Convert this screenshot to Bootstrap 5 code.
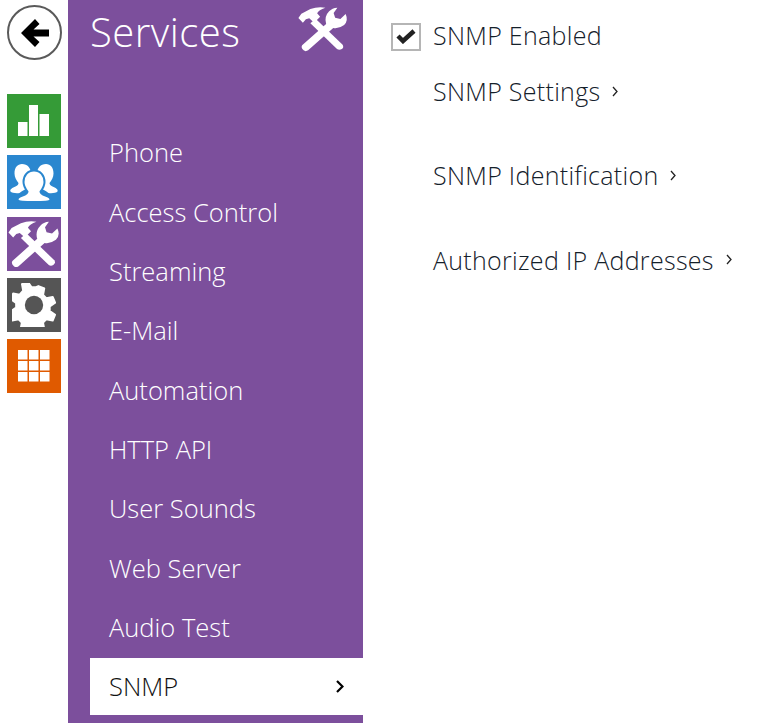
<!DOCTYPE html>
<html lang="en">
<head>
<meta charset="utf-8">
<title>SNMP</title>
<link rel="stylesheet" href="https://cdn.jsdelivr.net/npm/bootstrap@5.3.0/dist/css/bootstrap.min.css">
<style>
html,body{height:723px;overflow:hidden;background:#fff}
body{font-family:"Open Sans","Liberation Sans",sans-serif;font-weight:300;color:#111}
.rail{width:68px;padding:5px 0 0 7px}
.back{width:55px;height:55px;border:2px solid #5a5a5a;border-radius:50%;margin-bottom:34px}
.tile{width:54px;height:54px;margin-bottom:7.25px}
.tile svg{flex-shrink:0}
.t-green{background:#359b37}.t-blue{background:#2a87cf}.t-purple{background:#7c4f9c}.t-gray{background:#555}.t-orange{background:#e05a00}
.panel{width:295px;height:723px;background:#7c4f9c;color:#fff}
.head{height:124px;padding:4px 12px 0 22px}
.head h1{font-size:40px;font-weight:300;letter-spacing:.5px;margin:2px 0 0;line-height:52px}
.item{height:57px;margin:0 0 2.33px 22px;padding:0 19px 0 19px;font-size:25.5px;color:#fff}
.item.on{background:#fff;color:#111}
.main{padding:7px 0 0 28px}
.box{width:30px;height:28px;border:2px solid #b5b5b5;margin:3px 12px 0 0}
.line{font-size:25px;letter-spacing:.3px;line-height:56px;height:56px;color:#14202a}
.gap-line{margin:0 0 28.3px 42px}
.chev{margin-left:12px}
</style>
</head>
<body>
<svg width="0" height="0" class="position-absolute">
<symbol id="tools" viewBox="9 0 149.300 150" preserveAspectRatio="none">
<path fill="#fff" d="M18 42L26 29L50 15Q70 7 90 11Q72 18 68 28L76 38L60 56L47 43L38 46L30 56Z"/>
<path fill="#fff" d="M50 58L64 44L136 122Q140 130 134 135Q127 140 121 135Z"/>
<path fill="#fff" d="M28 124L92 60Q86 38 100 22Q108 12 122 11L112 27L116 41L130 45L144 30Q152 50 140 63Q126 75 111 72L44 139Q37 144 32 139Q24 132 28 124Z"/>
</symbol>
</svg>
<div class="d-flex">
<div class="rail flex-shrink-0">
<div class="back d-flex align-items-center justify-content-center">
<svg width="28" height="28" viewBox="0 0 28 28"><path d="M0 14L14 0L18.500 5L12.500 10.500H28V17.500H12.500L18.500 23L14 28Z" fill="#000"/></svg>
</div>
<div class="tile t-green d-flex align-items-center justify-content-center">
<svg width="32" height="32" viewBox="0 0 32 32"><path d="M0 17h9.500v14H0zM11 0h9v31h-9zM21.500 9H31v22h-9.500z" fill="#fff"/></svg>
</div>
<div class="tile t-blue d-flex align-items-center justify-content-center">
<svg width="54" height="54" viewBox="0 0 54 54"><g fill="#fff"><path d="M15 9c5.500 0 9 4 9 10 0 4-1.500 7-3.500 9.500 0 2 1 3 2 4-3 1-7 3-10 5.500-3 .5-8 0-9-1.500-1-2 2-4 5-5 2-1 3-2 3-3.500-2-2.500-4-5.500-4-9.500 0-6 3-9.500 7.500-9.500z"/><path d="M15 9c5.500 0 9 4 9 10 0 4-1.500 7-3.500 9.500 0 2 1 3 2 4-3 1-7 3-10 5.500-3 .5-8 0-9-1.500-1-2 2-4 5-5 2-1 3-2 3-3.500-2-2.500-4-5.500-4-9.500 0-6 3-9.500 7.500-9.500z" transform="matrix(-1 0 0 1 54 0)"/><path d="M27 15.500c6.500 0 10.500 5 10.500 11.500 0 4-2 7-4 9.500 0 2 2 3 5 4 3 1 5 2 5 4 0 2-8 2.500-16.500 2.500s-16.500-.5-16.500-2.500c0-2 2-3 5-4 3-1 5-2 5-4-2-2.500-4-5.500-4-9.500 0-6.500 4-11.500 10.500-11.500z" stroke="#2a87cf" stroke-width="2"/></g></svg>
</div>
<div class="tile t-purple d-flex align-items-center justify-content-center">
<svg width="58" height="52"><use href="#tools"/></svg>
</div>
<div class="tile t-gray d-flex align-items-center justify-content-center">
<svg width="44" height="44" viewBox="-2 -2 48 48"><path fill="#fff" stroke="#fff" stroke-width="2" stroke-linejoin="round" fill-rule="evenodd" transform="rotate(22.5 22 22)" d="M18.500 1h7l1.500 7 4.500 1.900 6-3.900 4.900 4.900-3.900 6 1.900 4.500 7 1.500v7l-7 1.500-1.900 4.500 3.900 6-4.900 4.900-6-3.900-4.500 1.900-1.500 7h-7l-1.500-7-4.500-1.900-6 3.900L1.100 38l3.900-6-1.900-4.500-7-1.500v-7l7-1.500L5 12 1.100 6 6 1.100l6 3.900 4.500-1.900z" transform-origin="0 0"/><circle cx="22" cy="22" r="10" fill="#555"/></svg>
</div>
<div class="tile t-orange d-flex align-items-center justify-content-center">
<svg width="32" height="32" viewBox="0 0 32 32"><path fill="#fff" d="M0 0h9.500v9.500H0zM11 0h9.500v9.500H11zM22 0h9.500v9.500H22zM0 11h9.500v9.500H0zM11 11h9.500v9.500H11zM22 11h9.500v9.500H22zM0 22h9.500v9.500H0zM11 22h9.500v9.500H11zM22 22h9.500v9.500H22z"/></svg>
</div>
</div>
<div class="panel flex-shrink-0">
<div class="head d-flex justify-content-between align-items-start">
<h1>Services</h1>
<svg width="56" height="50"><use href="#tools"/></svg>
</div>
<div class="item d-flex align-items-center">Phone</div>
<div class="item d-flex align-items-center">Access Control</div>
<div class="item d-flex align-items-center">Streaming</div>
<div class="item d-flex align-items-center">E-Mail</div>
<div class="item d-flex align-items-center">Automation</div>
<div class="item d-flex align-items-center">HTTP API</div>
<div class="item d-flex align-items-center">User Sounds</div>
<div class="item d-flex align-items-center">Web Server</div>
<div class="item d-flex align-items-center">Audio Test</div>
<div class="item on d-flex align-items-center justify-content-between">SNMP
<svg width="8" height="13" viewBox="0 0 8 13"><path d="M1 1l5.500 5.500L1 12" fill="none" stroke="#000" stroke-width="2.200"/></svg>
</div>
</div>
<div class="main flex-grow-1">
<div class="line d-flex align-items-center">
<span class="box d-flex align-items-center justify-content-center flex-shrink-0"><svg width="20" height="15" viewBox="0 0 20 15"><path d="M2 7l5 5L18 2" fill="none" stroke="#222" stroke-width="4.500"/></svg></span>
SNMP Enabled</div>
<div class="line gap-line d-flex align-items-center">SNMP Settings<svg class="chev" width="6" height="11" viewBox="0 0 6 11"><path d="M1 1l4 4.500L1 10" fill="none" stroke="#222" stroke-width="1.300"/></svg></div>
<div class="line gap-line d-flex align-items-center">SNMP Identification<svg class="chev" width="6" height="11" viewBox="0 0 6 11"><path d="M1 1l4 4.500L1 10" fill="none" stroke="#222" stroke-width="1.300"/></svg></div>
<div class="line gap-line d-flex align-items-center">Authorized IP Addresses<svg class="chev" width="6" height="11" viewBox="0 0 6 11"><path d="M1 1l4 4.500L1 10" fill="none" stroke="#222" stroke-width="1.300"/></svg></div>
</div>
</div>
</body>
</html>
